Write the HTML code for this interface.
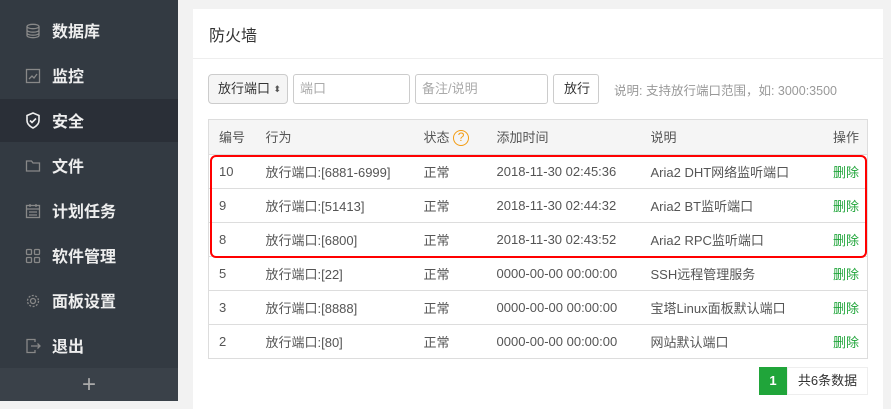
<!DOCTYPE html>
<html><head><meta charset="utf-8"><style>
*{box-sizing:border-box;margin:0;padding:0}
body{width:891px;height:401px;overflow:hidden;background:#f2f2f2;font-family:"Liberation Sans","Noto Sans CJK SC",sans-serif;position:relative;font-size:13px;color:#555}
.side{position:absolute;left:0;top:0;width:178px;height:401px;background:#333a42}
.item{position:absolute;left:0;width:178px;height:43px;display:flex;align-items:center;color:#eee;font-size:16px;font-weight:bold}
.item.act{background:#2a2f37}
.item svg{position:absolute;left:25px}
.item span{position:absolute;left:52px;top:9px}
.add{position:absolute;left:0;top:368px;width:178px;height:33px;background:#3a4149;color:#aaa;text-align:center;font-size:24px;line-height:33px}
.card{position:absolute;left:193px;top:9px;width:690px;height:400px;background:#fff}
.title{position:absolute;left:16px;top:13px;font-size:16px;color:#333}
.hline{position:absolute;left:0;top:49px;width:690px;height:1px;background:#eee}
.ctl{position:absolute;top:74px;height:30px;border:1px solid #ccc;border-radius:3px;font-size:13px;line-height:28px;padding-left:6px;color:#aaa}
table{position:absolute;border-collapse:collapse;border:1px solid #ddd;width:660px}
td,th{height:34px;border-top:1px solid #ddd;text-align:left;font-weight:normal;padding-left:10px;color:#555;vertical-align:middle;padding-bottom:1px}
th{background:#f5f5f5;height:35px}
.g{color:#20a53a;text-align:right;padding-right:8px}
.red{position:absolute;left:210px;top:155px;width:657px;height:103px;border:2px solid #f00;border-radius:6px}
</style></head><body>
<div class="side">
<div class="item" style="top:9px"><svg width="16" height="16" viewBox="0 0 16 16" fill="none" stroke="#888" stroke-width="1.3"><ellipse cx="8" cy="3.5" rx="6" ry="2.2"/><path d="M2 3.5v9c0 1.2 2.7 2.2 6 2.2s6-1 6-2.2v-9M2 7c0 1.2 2.7 2.2 6 2.2S14 8.2 14 7M2 10c0 1.2 2.7 2.2 6 2.2s6-1 6-2.2"/></svg><span>数据库</span></div>
<div class="item" style="top:54px"><svg width="16" height="16" viewBox="0 0 16 16" fill="none" stroke="#888" stroke-width="1.3"><rect x="1.5" y="1.5" width="13" height="13"/><path d="M4 11l3-3 2 2 3-4"/></svg><span>监控</span></div>
<div class="item act" style="top:99px"><svg width="16" height="17" viewBox="0 0 16 17" fill="none" stroke="#eee" stroke-width="1.6"><path d="M8 1l6 2.5v5c0 3.5-3 6-6 7.5-3-1.5-6-4-6-7.5v-5z"/><path d="M5 8.5l2 2 4-4"/></svg><span>安全</span></div>
<div class="item" style="top:144px"><svg width="16" height="16" viewBox="0 0 16 16" fill="none" stroke="#888" stroke-width="1.3"><path d="M1.5 3h5l1.5 2h6.5v8h-13z"/></svg><span>文件</span></div>
<div class="item" style="top:189px"><svg width="16" height="16" viewBox="0 0 16 16" fill="none" stroke="#888" stroke-width="1.3"><rect x="1.5" y="2.5" width="13" height="12"/><path d="M1.5 6h13M5 1v3M11 1v3M4 9h8M4 12h8"/></svg><span>计划任务</span></div>
<div class="item" style="top:234px"><svg width="16" height="16" viewBox="0 0 16 16" fill="none" stroke="#888" stroke-width="1.3"><rect x="1.5" y="1.5" width="5" height="5" rx="1"/><rect x="9.5" y="1.5" width="5" height="5" rx="1"/><rect x="1.5" y="9.5" width="5" height="5" rx="1"/><rect x="9.5" y="9.5" width="5" height="5" rx="1"/></svg><span>软件管理</span></div>
<div class="item" style="top:279px"><svg width="16" height="16" viewBox="0 0 16 16" fill="none" stroke="#888" stroke-width="1.3"><circle cx="8" cy="8" r="2.5"/><circle cx="8" cy="8" r="5.5" stroke-dasharray="2 1.5"/></svg><span>面板设置</span></div>
<div class="item" style="top:324px"><svg width="16" height="16" viewBox="0 0 16 16" fill="none" stroke="#888" stroke-width="1.3"><path d="M10 4V1.5H2v13h8V12M6 8h9M12.5 5.5L15 8l-2.5 2.5"/></svg><span>退出</span></div>
<div class="add">+</div>
</div>
<div class="card">
<div class="title">防火墙</div>
<div class="hline"></div>
</div>
<div class="ctl" style="left:208px;width:80px;background:#f5f5f5;color:#333;padding-left:9px;border-radius:4px">放行端口<span style="position:absolute;right:6px;top:0;font-size:9px;color:#555">⬍</span></div>
<div class="ctl" style="left:293px;width:117px">端口</div>
<div class="ctl" style="left:415px;width:133px">备注/说明</div>
<div class="ctl" style="left:553px;width:46px;color:#333;padding-left:10px">放行</div>
<div style="position:absolute;left:614px;top:80px;font-size:12.5px;color:#999">说明: 支持放行端口范围，如: 3000:3500</div>
<table style="left:208px;top:119px">
<tr><th style="width:47px">编号</th><th style="width:158px">行为</th><th style="width:73px">状态 <span style="display:inline-block;width:16px;height:16px;border:1.5px solid #f39c12;border-radius:50%;color:#f39c12;font-size:12px;line-height:13px;text-align:center;vertical-align:middle">?</span></th><th style="width:154px">添加时间</th><th>说明</th><th class="g" style="color:#555">操作</th></tr>
<tr><td>10</td><td>放行端口:[6881-6999]</td><td>正常</td><td>2018-11-30 02:45:36</td><td>Aria2 DHT网络监听端口</td><td class="g">删除</td></tr>
<tr><td>9</td><td>放行端口:[51413]</td><td>正常</td><td>2018-11-30 02:44:32</td><td>Aria2 BT监听端口</td><td class="g">删除</td></tr>
<tr><td>8</td><td>放行端口:[6800]</td><td>正常</td><td>2018-11-30 02:43:52</td><td>Aria2 RPC监听端口</td><td class="g">删除</td></tr>
<tr><td>5</td><td>放行端口:[22]</td><td>正常</td><td>0000-00-00 00:00:00</td><td>SSH远程管理服务</td><td class="g">删除</td></tr>
<tr><td>3</td><td>放行端口:[8888]</td><td>正常</td><td>0000-00-00 00:00:00</td><td>宝塔Linux面板默认端口</td><td class="g">删除</td></tr>
<tr><td>2</td><td>放行端口:[80]</td><td>正常</td><td>0000-00-00 00:00:00</td><td>网站默认端口</td><td class="g">删除</td></tr>
</table>
<div class="red"></div>
<div style="position:absolute;left:759px;top:367px;width:28px;height:28px;background:#20a53a;color:#fff;text-align:center;line-height:28px;font-weight:bold">1</div>
<div style="position:absolute;left:787px;top:367px;width:81px;height:28px;border:1px solid #eee;color:#333;text-align:center;line-height:26px;font-size:13px">共6条数据</div>
</body></html>
